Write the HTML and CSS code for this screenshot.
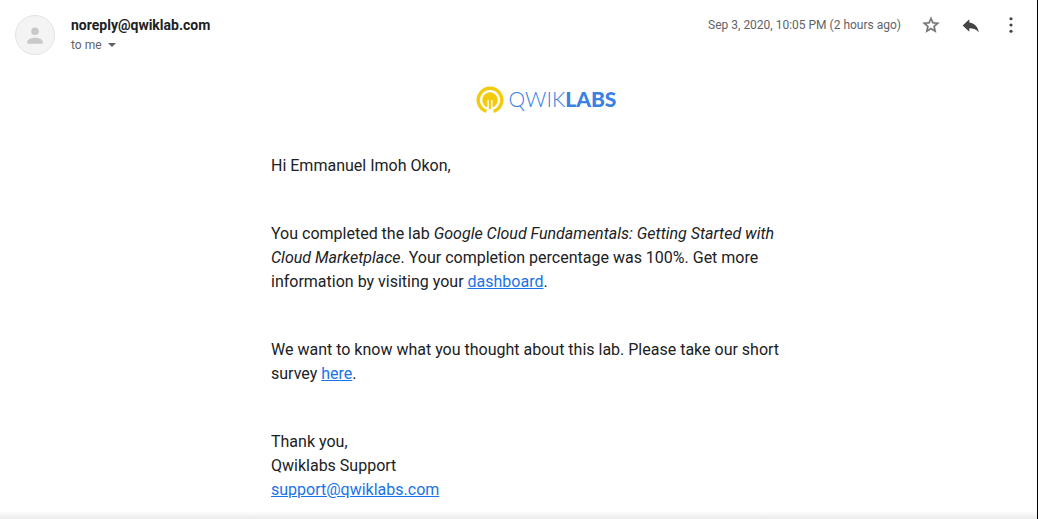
FILE: index.html
```html
<!DOCTYPE html>
<html lang="en">
<head>
<meta charset="utf-8">
<title>Qwiklabs message</title>
<link rel="stylesheet" href="styles.css">
</head>
<body>
<main class="message">
  <header class="header">
    <svg class="avatar" viewBox="0 0 40 40" aria-hidden="true">
      <circle cx="20" cy="20" r="19.5" fill="#f4f4f4" stroke="#e2e2e2"/>
      <circle cx="20" cy="16.300" r="3.800" fill="#c9c9c9"/>
      <path d="M12.300 28.800v-2c0-2.700 5.100-4.100 7.700-4.100s7.700 1.400 7.700 4.100v2z" fill="#c9c9c9"/>
    </svg>
    <div class="sender">
      <h1 class="sender-name">noreply@qwiklab.com</h1>
      <button class="recipient" type="button">to me
        <svg class="caret" viewBox="0 0 8 4" aria-hidden="true"><path d="M0 0h8L4 4z" fill="currentColor"/></svg>
      </button>
    </div>
    <time class="date" datetime="2020-09-03T22:05">Sep 3, 2020, 10:05 PM (2 hours ago)</time>
    <div class="actions">
      <button class="action star" type="button" aria-label="Star">
        <svg class="icon" viewBox="0 0 24 24"><path fill="currentColor" stroke="currentColor" stroke-width=".4" d="M22 9.240l-7.190-.62L12 2 9.190 8.630 2 9.240l5.460 4.730L5.820 21 12 17.270 18.180 21l-1.630-7.030L22 9.240zM12 15.400l-3.760 2.270 1-4.280-3.320-2.880 4.380-.38L12 6.100l1.710 4.040 4.380.38-3.320 2.880 1 4.280L12 15.400z"/></svg>
      </button>
      <button class="action" type="button" aria-label="Reply">
        <svg class="icon" viewBox="0 0 24 24"><path fill="currentColor" d="M10 9V5l-8 7.500 8 7.500v-4.100c5 0 9 1.600 11.500 5.100-1-6-4.500-11-11.500-12z"/></svg>
      </button>
      <button class="action" type="button" aria-label="More">
        <svg class="icon" viewBox="0 0 24 24"><g fill="currentColor"><circle cx="12" cy="4.500" r="1.900"/><circle cx="12" cy="12" r="1.900"/><circle cx="12" cy="19.500" r="1.900"/></g></svg>
      </button>
    </div>
  </header>
  <article class="content">
    <div class="letter">
      <div class="logo">
        <svg class="logo-mark" viewBox="0 0 28 28" aria-hidden="true">
          <path d="M10.500 25.300A11.800 11.800 0 1 1 17.500 25.300" fill="none" stroke="#f4cb0c" stroke-width="3.400"/>
          <path d="M11.500 21.300A7.700 7.700 0 1 1 16.500 21.300V14h-5z" fill="#f4cb0c"/>
          <path d="M14 14v9" stroke="#f4cb0c" stroke-width="2.400"/>
        </svg>
        <span class="logo-text">QWIK<b class="logo-strong">LABS</b></span>
      </div>
      <p class="paragraph">Hi Emmanuel Imoh Okon,</p>
      <p class="paragraph">You completed the lab <em>Google Cloud Fundamentals: Getting Started with Cloud Marketplace</em>. Your completion percentage was 100%. Get more information by visiting your <a class="link" href="#dashboard">dashboard</a>.</p>
      <p class="paragraph">We want to know what you thought about this lab. Please take our short survey <a class="link" href="#survey">here</a>.</p>
      <p class="paragraph">Thank you,<br>Qwiklabs Support<br><a class="link" href="mailto:support@qwiklabs.com">support@qwiklabs.com</a></p>
    </div>
  </article>
  <div class="bottom-edge"></div>
</main>
</body>
</html>
```

FILE: styles.css
```css
* {
  box-sizing: border-box;
}

body {
  margin: 0;
  background: #fff;
  color: #202124;
  font-family: Roboto, "Liberation Sans", sans-serif;
}

.message {
  display: flex;
  flex-direction: column;
  min-height: 100vh;
  border-right: 1px solid #000;
}

.header {
  display: flex;
  align-items: flex-start;
  padding: 15px 16px 0 15px;
}

.avatar {
  width: 40px;
  height: 40px;
  margin-right: 16px;
}

.sender {
  flex: 1;
}

.sender-name {
  margin: 0;
  font-size: 14px;
  line-height: 20px;
  font-weight: 700;
}

.recipient,
.action {
  display: flex;
  align-items: center;
  padding: 0;
  border: 0;
  background: none;
  font: inherit;
  cursor: pointer;
}

.recipient {
  gap: 6px;
  color: #5f6368;
  font-size: 12px;
  line-height: 20px;
}

.caret {
  width: 8px;
  height: 4px;
}

.date {
  color: #5f6368;
  font-size: 12px;
  line-height: 20px;
}

.actions {
  display: flex;
  gap: 20px;
  margin-left: 20px;
}

.action {
  height: 20px;
  color: #444;
}

.star {
  color: #707070;
}

.icon {
  width: 20px;
  height: 20px;
}

.content {
  flex: 1;
  padding: 31px 16px 0 71px;
}

.letter {
  max-width: 550px;
  margin: 0 auto;
}

.logo {
  display: flex;
  align-items: flex-start;
  justify-content: center;
  gap: 5px;
  color: #3981e3;
}

.logo-mark {
  width: 28px;
  height: 28px;
}

.logo-text {
  font-family: Lato, sans-serif;
  font-size: 21px;
  line-height: 26px;
  font-weight: 300;
}

.logo-strong {
  font-weight: 900;
}

.paragraph {
  margin: 0 0 44px;
  padding-right: 30px;
  font-size: 16px;
  line-height: 24px;
}

.logo + .paragraph {
  margin-top: 40px;
}

.paragraph:last-child {
  margin-bottom: 0;
}

.link {
  color: #1a73e8;
}

.bottom-edge {
  height: 8px;
  background: linear-gradient(#fff, #ececec);
}
```
